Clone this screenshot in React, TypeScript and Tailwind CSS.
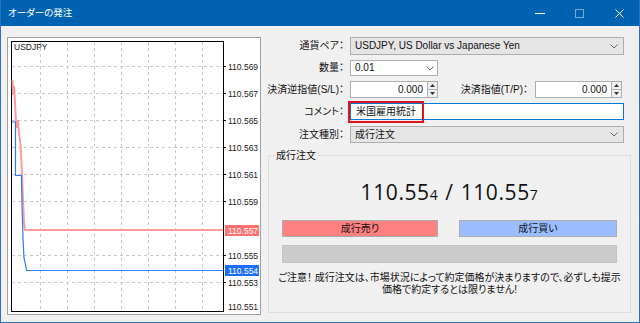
import React from 'react'

const prices = [
  { v: '110.569', y: 66.5 },
  { v: '110.567', y: 93.5 },
  { v: '110.565', y: 120.5 },
  { v: '110.563', y: 147.5 },
  { v: '110.561', y: 174.5 },
  { v: '110.559', y: 201.5 },
  { v: '110.555', y: 255.5 },
  { v: '110.553', y: 282.5 },
]
const gridX = [40.5, 67.5, 94.5, 121.5, 148.5, 175.5, 202.5]

function Chart() {
  return (
    <div className="ml-[6px] mt-[11px] h-[278px] w-[254px] border border-[#a0a0a0] bg-white">
      <svg width="252" height="276" viewBox="8 38 252 276" className="block">
        {prices.map((p) => (
          <line key={p.v} x1="12" x2="223" y1={p.y} y2={p.y} stroke="#c8c8c8" strokeDasharray="3 3" />
        ))}
        {gridX.map((x) => (
          <line key={x} x1={x} x2={x} y1="42" y2="311" stroke="#c8c8c8" strokeDasharray="3 3" />
        ))}
        <rect x="11.5" y="41.5" width="212" height="270" fill="none" stroke="#000" />
        <text x="14" y="50" fontSize="8.5" fill="#222" fontFamily="Liberation Sans, sans-serif">USDJPY</text>
        {/* ask */}
        <polyline
          points="12.5,80 13,95 14,86 15,102 16,122 17,128 18,120 19,134 20,140 21,152 22,176 23,200 24,222 25,230 223,230"
          fill="none"
          stroke="#ff9a9a"
          strokeWidth="2"
        />
        {/* bid */}
        <polyline
          points="12,122 15.5,122 15.5,175.5 21.5,175.5 22,205 23,238 24,258 25,262 26.5,270.5 223,270.5"
          fill="none"
          stroke="#2f7bff"
          strokeWidth="1.2"
        />
        {prices.map((p) => (
          <g key={p.v + 't'}>
            <line x1="223" x2="226" y1={p.y} y2={p.y} stroke="#000" />
            <text x="228" y={p.y + 3} fontSize="8.5" fill="#1a1a1a" fontFamily="Liberation Sans, sans-serif">
              {p.v}
            </text>
          </g>
        ))}
        <text x="228" y="310" fontSize="8.5" fill="#1a1a1a" fontFamily="Liberation Sans, sans-serif">110.551</text>
        <rect x="225" y="225" width="34" height="11" fill="#ff7070" />
        <text x="228" y="233.5" fontSize="8.5" fill="#fff" fontFamily="Liberation Sans, sans-serif">110.557</text>
        <rect x="225" y="265" width="34" height="11" fill="#1a6dff" />
        <text x="228" y="273.5" fontSize="8.5" fill="#fff" fontFamily="Liberation Sans, sans-serif">110.554</text>
      </svg>
    </div>
  )
}

function Chevron() {
  return (
    <svg width="8" height="5" viewBox="0 0 8 5">
      <polyline points="0.5,0.5 4,4 7.5,0.5" fill="none" stroke="#666" />
    </svg>
  )
}

function Spin() {
  return (
    <div className="flex w-[10px] flex-col border border-l-0 border-[#adadad] bg-[#f0f0f0]">
      <div className="flex flex-1 items-center justify-center border-b border-[#adadad]">
        <svg width="5" height="3"><polygon points="0,3 2.5,0 5,3" fill="#333" /></svg>
      </div>
      <div className="flex flex-1 items-center justify-center">
        <svg width="5" height="3"><polygon points="0,0 2.5,3 5,0" fill="#333" /></svg>
      </div>
    </div>
  )
}

function Label({ children }: { children: React.ReactNode }) {
  return <div className="flex w-[82px] shrink-0 justify-end whitespace-nowrap pr-[6px]">{children}</div>
}

function Combo({ text }: { text: string }) {
  return (
    <div className="flex h-full w-[274px] items-center justify-between border border-[#adadad] bg-[#e5e5e5] pl-[4px] pr-[5px]">
      <span>{text}</span>
      <Chevron />
    </div>
  )
}

export default function App() {
  return (
    <div className="flex h-[323px] w-[640px] flex-col border-x border-b border-[#2a72c2] bg-[#f0f0f0] font-['Liberation_Sans','Noto_Sans_CJK_JP',sans-serif] text-[10px] leading-[12px] text-[#111] [font-feature-settings:'palt']">
      <div className="flex h-[26px] shrink-0 items-center bg-[#0063b1] pl-[7px] text-white">
        <span className="text-[9.5px]">オーダーの発注</span>
        <div className="ml-auto flex items-center">
          <svg width="10" height="10" className="mr-[30px]"><line x1="0" x2="10" y1="5.5" y2="5.5" stroke="#fff" /></svg>
          <svg width="9" height="9" className="mr-[31px]"><rect x="0.5" y="0.5" width="8" height="8" fill="none" stroke="#fff" strokeOpacity="0.45" /></svg>
          <svg width="9" height="9" className="mr-[15px]"><path d="M0.5,0.5 L8.5,8.5 M8.5,0.5 L0.5,8.5" stroke="#fff" /></svg>
        </div>
      </div>
      <div className="flex flex-1">
        <Chart />
        <div className="ml-[7px] flex w-[363px] flex-col">
          <div className="mt-[11px] flex h-[18px] items-center">
            <Label>通貨ペア：</Label>
            <Combo text="USDJPY, US Dollar vs Japanese Yen" />
          </div>
          <div className="mt-[5px] flex h-[16px] items-center">
            <Label>数量：</Label>
            <div className="flex h-full w-[88px] items-center justify-between border border-[#adadad] bg-white pl-[4px] pr-[3px]">
              <span>0.01</span>
              <Chevron />
            </div>
          </div>
          <div className="mt-[5px] flex h-[17px] items-center">
            <Label>決済逆指値(S/L)：</Label>
            <div className="flex h-full w-[88px]">
              <div className="flex flex-1 items-center justify-end border border-[#adadad] bg-white pr-[4px]">0.000</div>
              <Spin />
            </div>
            <div className="flex w-[97px] justify-end whitespace-nowrap pr-[7px]">決済指値(T/P)：</div>
            <div className="flex h-full w-[87px]">
              <div className="flex flex-1 items-center justify-end border border-[#adadad] bg-white pr-[4px]">0.000</div>
              <Spin />
            </div>
          </div>
          <div className="mt-[5px] flex h-[17px] items-center">
            <Label>コメント：</Label>
            <div className="relative flex h-full w-[274px] items-center border border-[#0078d7] bg-white pl-[5px]">
              <span>米国雇用統計</span>
              <div className="absolute -left-[3px] -top-[3px] h-[22px] w-[76px] border-2 border-[#e3131e]" />
            </div>
          </div>
          <div className="mt-[6px] flex h-[17px] items-center">
            <Label>注文種別：</Label>
            <Combo text="成行注文" />
          </div>
          <div className="relative mt-[12px] flex h-[158px] flex-col border border-[#dcdcdc]">
            <span className="absolute -top-[6px] left-[6px] bg-[#f0f0f0] px-[1px]">成行注文</span>
            <div className="mt-[23px] flex h-[26px] items-baseline justify-center font-['Open_Sans',sans-serif] text-[21px] leading-[26px] tracking-[0.6px] text-[#111]">
              <span>110.55</span>
              <span className="text-[14px]">4</span>
              <span className="mx-[7px]">/</span>
              <span>110.55</span>
              <span className="text-[14px]">7</span>
            </div>
            <div className="mt-[15px] flex h-[17px] pl-[13px]">
              <div className="flex w-[156px] items-center justify-center border border-[#adadad] bg-[#ff8080]">成行売り</div>
              <div className="ml-[21px] flex w-[158px] items-center justify-center border border-[#adadad] bg-[#9bbcff]">成行買い</div>
            </div>
            <div className="ml-[13px] mt-[8px] h-[18px] w-[335px] border border-[#c4c4c4] bg-[#cccccc]" />
            <div className="mt-[9px] text-center leading-[12px]">
              <div>ご注意！ 成行注文は、市場状況によって約定価格が決まりますので、必ずしも提示</div>
              <div>価格で約定するとは限りません!</div>
            </div>
          </div>
        </div>
      </div>
    </div>
  )
}
